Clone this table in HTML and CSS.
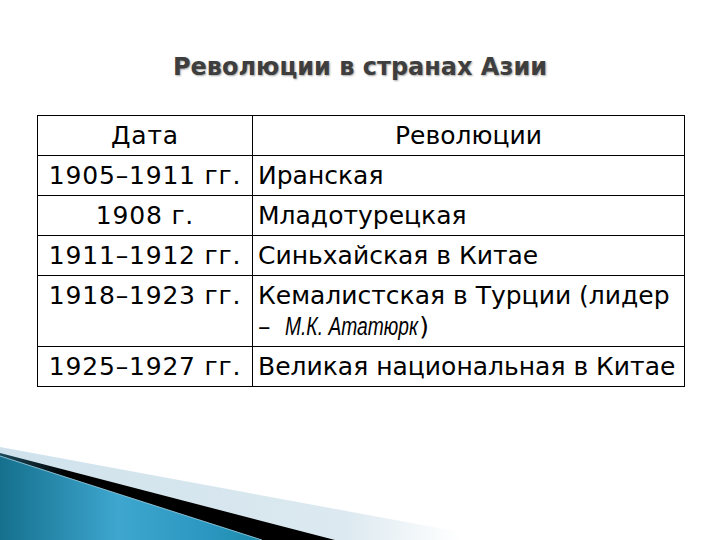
FILE: index.html
```html
<!DOCTYPE html>
<html lang="ru">
<head>
<meta charset="utf-8">
<link rel="stylesheet" href="styles.css">
</head>
<body>
<div class="slide">
  <h1 class="title">Революции в странах Азии</h1>
  <table class="rev">
    <tr><td class="date">Дата</td><td class="head">Революции</td></tr>
    <tr><td class="date">1905–1911 гг.</td><td>Иранская</td></tr>
    <tr><td class="date">1908 г.</td><td>Младотурецкая</td></tr>
    <tr><td class="date">1911–1912 гг.</td><td>Синьхайская в Китае</td></tr>
    <tr><td class="date top">1918–1923 гг.</td><td>Кемалистская в Турции (лидер<br>– <span class="it">М.К. Ататюрк</span>)</td></tr>
    <tr><td class="date">1925–1927 гг.</td><td>Великая национальная в Китае</td></tr>
  </table>
  <svg class="deco" width="460" height="100" viewBox="0 440 460 100" xmlns="http://www.w3.org/2000/svg">
    <defs>
      <linearGradient id="pale" x1="0" y1="0" x2="1" y2="0">
        <stop offset="0" stop-color="#cfe2ec"/>
        <stop offset="0.75" stop-color="#dce9f0"/>
        <stop offset="1" stop-color="#ffffff"/>
      </linearGradient>
      <linearGradient id="dark" x1="0" y1="0" x2="1" y2="0">
        <stop offset="0" stop-color="#1c4a5c"/>
        <stop offset="0.2" stop-color="#000000"/>
        <stop offset="1" stop-color="#000000"/>
      </linearGradient>
      <linearGradient id="blue" x1="0" y1="0" x2="1" y2="0">
        <stop offset="0" stop-color="#15708d"/>
        <stop offset="0.45" stop-color="#3ea6cf"/>
        <stop offset="0.8" stop-color="#2b97c0"/>
        <stop offset="1" stop-color="#1b8aa8"/>
      </linearGradient>
    </defs>
    <polygon points="0,447 460,532 460,540 0,540" fill="url(#pale)"/>
    <polygon points="0,453 335,540 0,540" fill="url(#dark)"/>
    <polygon points="0,456 262,540 0,540" fill="url(#blue)"/>
    <line x1="0" y1="456" x2="262" y2="540" stroke="#9fd6ea" stroke-width="0.8"/>
  </svg>
</div>
</body>
</html>
```
FILE: styles.css
```css
html, body {
  margin: 0;
  padding: 0;
  background: #ffffff;
}
.slide {
  position: relative;
  width: 720px;
  height: 540px;
  overflow: hidden;
  padding-top: 48px;
  box-sizing: border-box;
  font-family: "DejaVu Sans", Verdana, sans-serif;
}
.title {
  margin: 0;
  text-align: center;
  font-size: 24px;
  line-height: 38px;
  font-weight: bold;
  color: #3e3e3e;
  text-shadow: 1px 1px 2px rgba(0, 0, 0, 0.35);
}
.rev {
  margin: 29px 0 0 37px;
  width: 648px;
  border-collapse: collapse;
  font-size: 25px;
  line-height: 31px;
  color: #000;
}
.rev td {
  border: 1px solid #000;
  padding: 4px 5px;
  vertical-align: middle;
  white-space: nowrap;
}
.rev td.date {
  width: 204px;
  text-align: center;
  letter-spacing: 0.8px;
}
.rev td.top {
  vertical-align: top;
}
.rev td.head {
  text-align: center;
}
.it {
  display: inline-block;
  margin-left: 7px;
  margin-right: -46px;
  font-family: "Liberation Sans", Arial, sans-serif;
  font-style: italic;
  font-size: 26px;
  transform: scaleX(0.74);
  transform-origin: left center;
}
.deco {
  position: absolute;
  left: 0;
  bottom: 0;
  display: block;
}
```
